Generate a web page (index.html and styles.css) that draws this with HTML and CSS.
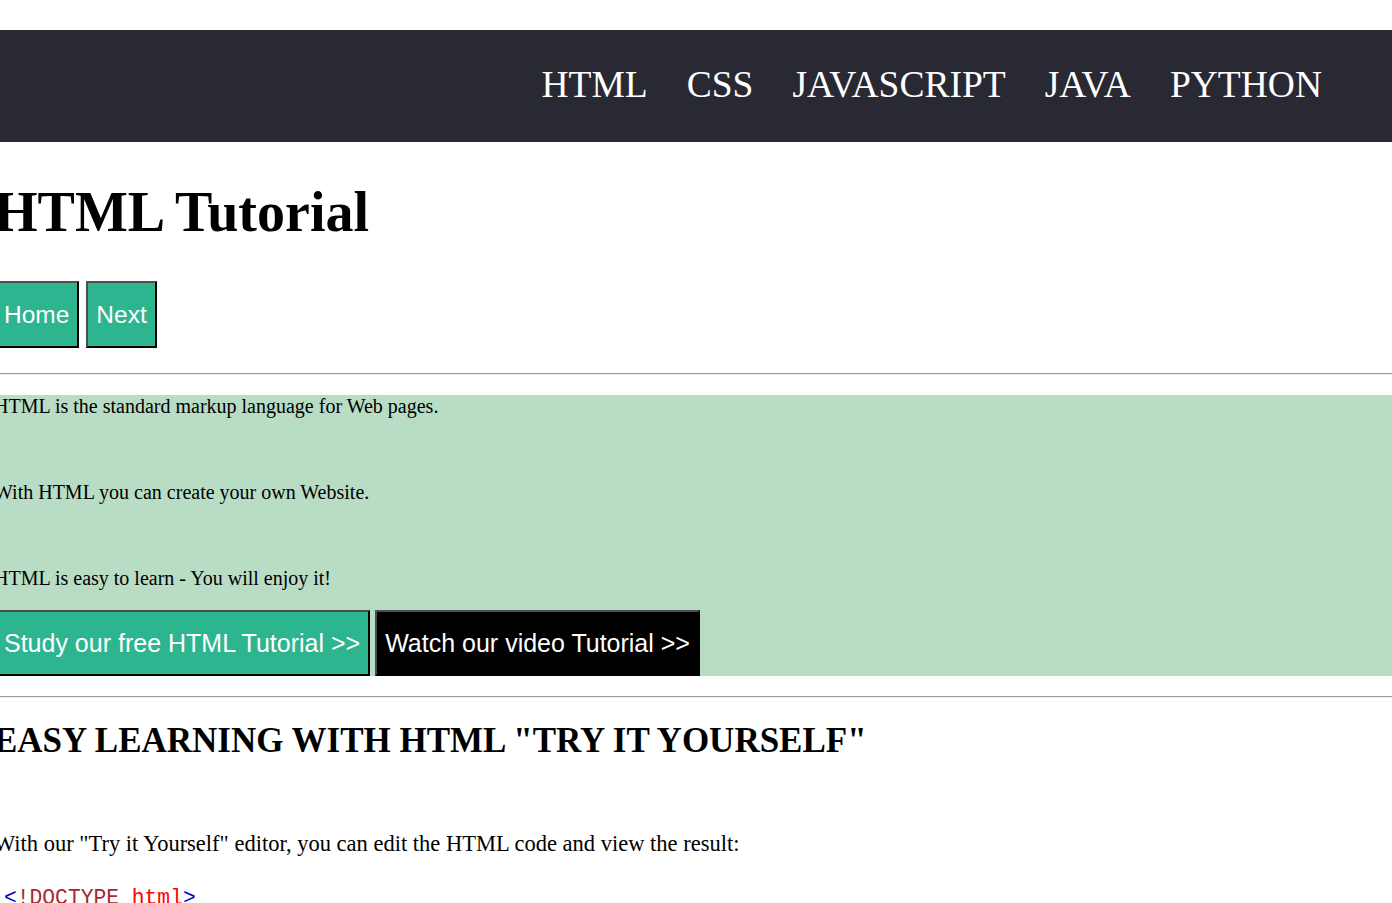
FILE: index.html
```html
<!DOCTYPE html>
<html lang="en">
<head>
<meta charset="utf-8">
<title>HTML Tutorial</title>
<link rel="stylesheet" href="styles.css">
</head>
<body>
<nav class="topnav">
  <ul class="topnav-list">
    <li><a href="#" class="topnav-link">HTML</a></li>
    <li><a href="#" class="topnav-link">CSS</a></li>
    <li><a href="#" class="topnav-link">JAVASCRIPT</a></li>
    <li><a href="#" class="topnav-link">JAVA</a></li>
    <li><a href="#" class="topnav-link">PYTHON</a></li>
  </ul>
</nav>
<main class="content">
  <h1 class="page-title">HTML Tutorial</h1>
  <div class="pager">
    <a href="#" class="btn btn-green btn-pager">Home</a>
    <a href="#" class="btn btn-green btn-pager">Next</a>
  </div>
  <hr class="rule">
  <section class="intro">
    <p class="intro-text">HTML is the standard markup language for Web pages.</p>
    <p class="intro-text">With HTML you can create your own Website.</p>
    <p class="intro-text intro-last">HTML is easy to learn - You will enjoy it!</p>
    <div class="intro-actions">
      <a href="#" class="btn btn-green">Study our free HTML Tutorial &gt;&gt;</a>
      <a href="#" class="btn btn-black">Watch our video Tutorial &gt;&gt;</a>
    </div>
  </section>
  <hr class="rule rule-after">
  <h2 class="section-title">EASY LEARNING WITH HTML "TRY IT YOURSELF"</h2>
  <p class="section-text">With our "Try it Yourself" editor, you can edit the HTML code and view the result:</p>
  <div class="code"><span class="c-tag">&lt;</span><span class="c-doc">!DOCTYPE</span> <span class="c-attr">html</span><span class="c-tag">&gt;</span></div>
</main>
</body>
</html>
```
FILE: styles.css
```css
html, body {
  margin: 0;
  padding: 0;
  background: #ffffff;
  overflow: hidden;
}

body {
  font-family: "Liberation Serif", "Times New Roman", serif;
  color: #000;
}

.topnav {
  margin-top: 30px;
  height: 112px;
  background: #282932;
  display: flex;
  align-items: center;
  justify-content: flex-end;
  padding-right: 70px;
}

.topnav-list {
  list-style: none;
  margin: 0;
  padding: 0;
  display: flex;
  gap: 39px;
}

.topnav-link {
  color: #ffffff;
  text-decoration: none;
  font-size: 37.5px;
  line-height: 44px;
  display: block;
  padding-bottom: 2px;
}

.content {
  margin-left: -6px;
}

.page-title {
  font-size: 56px;
  font-weight: bold;
  margin: 38px 0 37px;
  line-height: 64px;
}

.pager {
  display: flex;
  gap: 7px;
  margin-bottom: 25px;
}

.btn {
  display: inline-block;
  font-family: "Liberation Sans", Arial, sans-serif;
  font-size: 25px;
  line-height: 28px;
  padding: 17px 8px;
  color: #ffffff;
  text-decoration: none;
  border-style: solid;
  border-width: 2px;
  border-color: #4e4e4e #000 #000 #4e4e4e;
}

.btn-pager {
  font-size: 24.5px;
  line-height: 29px;
}

.btn-green {
  background: #2db58f;
}

.btn-black {
  background: #000000;
}

.rule {
  margin: 0 0 0 6px;
  border: 0;
  border-top: 1px solid #9a9a9a;
  border-bottom: 1px solid #eeeeee;
  height: 0;
}

.intro {
  margin-top: 20px;
  margin-left: 6px;
  background: #b9dcc5;
}

.intro-text {
  font-size: 20px;
  line-height: 23px;
  margin: 0 0 63px -6px;
}

.intro-last {
  margin-bottom: 20px;
}

.intro-actions {
  display: flex;
  gap: 5px;
  margin-left: -6px;
}

.rule-after {
  margin-top: 20px;
}

.section-title {
  font-size: 35px;
  line-height: 41px;
  margin: 22px 0 0;
}

.section-text {
  font-size: 22.5px;
  line-height: 25px;
  margin: 70px 0 0;
}

.code {
  font-family: "Liberation Mono", "DejaVu Sans Mono", monospace;
  font-size: 21.3px;
  line-height: 24px;
  margin: 30px 0 0 10px;
}

.c-tag { color: #0000cd; }
.c-doc { color: #a52a2a; }
.c-attr { color: #ff0000; }
```
